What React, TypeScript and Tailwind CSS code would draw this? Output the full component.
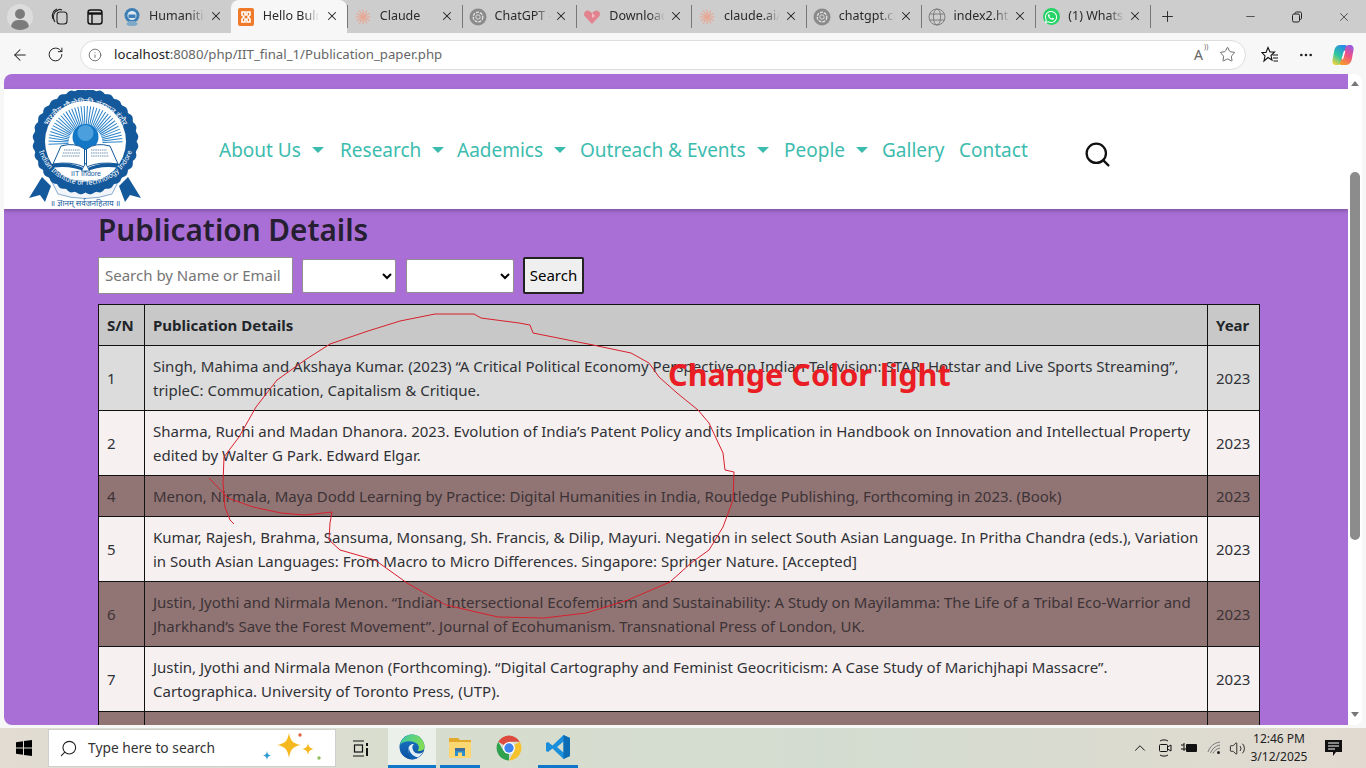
import React from "react";
import {
  ArrowLeft,
  RotateCw,
  Info,
  Star,
  Ellipsis,
  X,
  Plus,
  Minus,
  Search,
  ChevronUp,
  Volume2,
} from "lucide-react";
import { FaWhatsapp } from "react-icons/fa";

const uiFont = "font-['Noto_Sans','Open_Sans',sans-serif]";

// little favicons used on the tabs
function ClaudeMark({ size = 16 }: { size?: number }) {
  return (
    <svg width={size} height={size} viewBox="0 0 16 16" stroke="#e9a692" strokeWidth="1.2" strokeLinecap="round">
      {[0, 30, 60, 90, 120, 150, 180, 210, 240, 270, 300, 330].map((a) => (
        <line key={a} x1="8" y1="8" x2="8" y2="1" transform={`rotate(${a} 8 8)`} />
      ))}
    </svg>
  );
}

function GptMark() {
  return (
    <svg width="18" height="18" viewBox="0 0 18 18">
      <circle cx="9" cy="9" r="8.5" fill="#8a8a8a" />
      <circle cx="9" cy="9" r="4.8" fill="none" stroke="#e5e5e5" strokeWidth="1.3" strokeDasharray="3 1" />
      <circle cx="9" cy="9" r="2.2" fill="none" stroke="#e5e5e5" strokeWidth="0.9" />
    </svg>
  );
}

function Favicon({ kind }: { kind: string }) {
  if (kind === "iit") {
    return (
      <svg width="16" height="20" viewBox="0 0 16 20">
        <circle cx="8" cy="8.5" r="7.5" fill="#3d7fb5" />
        <circle cx="8" cy="8.5" r="4.5" fill="#dce9f2" />
        <rect x="4.5" y="7.5" width="7" height="3.5" fill="#3d7fb5" />
        <path d="M2 17 L5 14 H11 L14 17 L11 19 H5 Z" fill="#7ea9c8" />
      </svg>
    );
  }
  if (kind === "xampp") {
    return (
      <svg width="16" height="18" viewBox="0 0 16 18">
        <rect width="16" height="18" rx="2" fill="#ef7a2a" />
        <path d="M4 4 H7 V7 H9 V4 H12 V7 L10 9 L12 11 V14 H9 V11 H7 V14 H4 V11 L6 9 L4 7 Z" fill="none" stroke="#fff" strokeWidth="1.6" />
      </svg>
    );
  }
  if (kind === "claude") return <ClaudeMark />;
  if (kind === "gpt") return <GptMark />;
  if (kind === "heart") {
    return (
      <svg width="18" height="18" viewBox="0 0 18 18">
        <path d="M9 16 L1.5 8 C-0.5 4.5 4 0.5 7 3.5 L9 5 L11.5 3 C14.5 1 18.5 4.5 16.5 8 Z" fill="#e2848f" />
        <path d="M9 5 L12 8 L9 10 Z" fill="#f3bcc3" />
      </svg>
    );
  }
  if (kind === "globe") {
    return (
      <svg width="18" height="18" viewBox="0 0 18 18" fill="none" stroke="#777" strokeWidth="0.9">
        <circle cx="9" cy="9" r="8" />
        <ellipse cx="9" cy="9" rx="3.6" ry="8" />
        <path d="M1.5 6 H16.5 M1.5 12 H16.5" />
      </svg>
    );
  }
  return (
    <span className="w-[17px] h-[17px] rounded-full bg-[#25d366] flex items-center justify-center text-white">
      <FaWhatsapp size={14} />
    </span>
  );
}

const tabs = [
  { title: "Humanitie", icon: "iit" },
  { title: "Hello Bulm", icon: "xampp", active: true },
  { title: "Claude", icon: "claude" },
  { title: "ChatGPT -", icon: "gpt" },
  { title: "Download", icon: "heart" },
  { title: "claude.ai/c", icon: "claude" },
  { title: "chatgpt.cc", icon: "gpt" },
  { title: "index2.htn", icon: "globe" },
  { title: "(1) Whats", icon: "whatsapp" },
];

function TabStrip() {
  return (
    <div className="flex items-end h-[33px] bg-[#cdcdcd] text-[12.5px] text-[#2a2a2a]">
      <div className="w-[116px] h-full flex items-center shrink-0">
        <span className="ml-[7px] w-[26px] h-[26px] rounded-full bg-[#dcdcdc] relative overflow-hidden flex justify-center">
          <span className="mt-[5px] w-[10px] h-[10px] rounded-full bg-[#7b7b7b]" />
          <span className="absolute top-[16px] w-[18px] h-[14px] rounded-full bg-[#7b7b7b]" />
        </span>
        <svg className="ml-[17px]" width="20" height="20" viewBox="0 0 20 20" fill="none" stroke="#222" strokeWidth="1.1">
          <rect x="7" y="5" width="10" height="12" rx="3" />
          <path d="M5 15 C3 12 3 8 5 5 L9 2.500 C10 2 11 2.500 12 3" />
          <path d="M3 12 C2 9 2.500 6 4 4 L7 2" />
        </svg>
        <svg className="ml-[16px]" width="18" height="18" viewBox="0 0 18 18" fill="none" stroke="#111" strokeWidth="1.4">
          <rect x="2" y="2" width="14" height="14" rx="2.5" />
          <path d="M2 5.500 H16" strokeWidth="2.4" />
          <path d="M6 6 V16" />
        </svg>
      </div>
      {tabs.map((t, i) => (
        <div
          key={i}
          className={
            t.active
              ? "relative w-[116px] h-[33px] shrink-0 flex items-center pl-[6px] bg-[#f7f7f7] rounded-t-lg"
              : "relative w-[114.75px] h-[33px] shrink-0 flex items-center pl-[6px] border-l border-[#8f8f8f] [border-image:linear-gradient(transparent_18%,#777_18%,#777_82%,transparent_82%)_1]"
          }
        >
          <span className="w-[18px] flex justify-center shrink-0">
            <Favicon kind={t.icon} />
          </span>
          <span className="ml-[8px] w-[56px] overflow-hidden whitespace-nowrap [mask-image:linear-gradient(90deg,#000_72%,transparent)]">
            {t.title}
          </span>
          <X className="absolute right-[8px] top-[9px]" size={14} strokeWidth={1.8} color="#222" />
        </div>
      ))}
      <div className="h-full flex items-center border-l border-[#8f8f8f] [border-image:linear-gradient(transparent_18%,#777_18%,#777_82%,transparent_82%)_1]">
        <Plus className="ml-[8px]" size={17} strokeWidth={1.3} color="#222" />
      </div>
      <div className="ml-auto h-full flex items-center">
        <Minus size={13} strokeWidth={1.3} color="#222" />
        <svg className="ml-[34px]" width="12" height="12" viewBox="0 0 12 12" fill="none" stroke="#222" strokeWidth="1">
          <rect x="1.500" y="3" width="7" height="8" rx="1.500" />
          <path d="M4 3 V2.500 C4 1.500 4.500 1 5.500 1 H9 C10 1 10.500 1.500 10.500 2.500 V7 C10.500 8 10 8.500 9 8.500" />
        </svg>
        <X className="ml-[34px] mr-[15px]" size={14} strokeWidth={1.2} color="#222" />
      </div>
    </div>
  );
}

function CopilotIcon() {
  return (
    <svg width="24" height="24" viewBox="0 0 24 24">
      <defs>
        <linearGradient id="copLeft" x1="0.7" y1="0" x2="0.2" y2="1">
          <stop offset="0" stopColor="#2a8be8" />
          <stop offset="0.55" stopColor="#2ec7a0" />
          <stop offset="1" stopColor="#f3d23a" />
        </linearGradient>
        <linearGradient id="copRight" x1="0.7" y1="0" x2="0.3" y2="1">
          <stop offset="0" stopColor="#9a5be0" />
          <stop offset="0.45" stopColor="#ee4f8a" />
          <stop offset="1" stopColor="#f59a2c" />
        </linearGradient>
      </defs>
      <path d="M9 2 H14 C15.500 2 16 3 15.500 4 L12 13 L9.500 20 C9 21.500 8 22 6.500 22 H5 C2.500 22 1 20 1.500 17 L3 9 C3.500 5 5.500 2 9 2 Z" fill="url(#copLeft)" />
      <path d="M15 22 H10 C9 22 8.500 21 9 20 L12.500 11 L14.500 4.500 C15 3 16 2 17.500 2 H19 C21.500 2 23 4 22.500 7 L21 15 C20.500 19 18.500 22 15 22 Z" fill="url(#copRight)" />
      <path d="M11.500 15.500 L13.500 8.500" stroke="#fff" strokeWidth="1.5" strokeLinecap="round" />
    </svg>
  );
}

function AddressBar() {
  return (
    <div className="h-[41px] bg-[#f7f7f7] flex items-center pl-[11px] pt-[2px]">
      <ArrowLeft size={18} strokeWidth={1.4} color="#222" />
      <RotateCw className="ml-[18px]" size={17} strokeWidth={1.4} color="#222" />
      <div className="ml-[16px] w-[1166px] h-[30px] rounded-full bg-white border border-[#dddddd] flex items-center pl-[7px]">
        <Info size={14} strokeWidth={1.5} color="#666" />
        <span className="ml-[12px] text-[13.2px] text-[#666]">
          <span className="text-[#1d1d1d]">localhost</span>:8080/php/IIT_final_1/Publication_paper.php
        </span>
        <span className="ml-auto text-[14px] text-[#666] relative">
          A<span className="absolute -top-[2px] left-[10px] text-[7px]">))</span>
        </span>
        <Star className="ml-[16px] mr-[9px]" size={17} strokeWidth={1.1} color="#444" />
      </div>
      <svg className="ml-[15px]" width="18" height="18" viewBox="0 0 18 18" fill="none" stroke="#111" strokeWidth="1.1">
        <path d="M7 1.500 L9 6 H13.500 L10 9.500 L11 14 L7 11.500 L3 15 L4 10 L1 6.500 H5 Z" />
        <path d="M11.500 9 H17 M12 12 H17 M12.500 15 H17" />
      </svg>
      <Ellipsis className="ml-[19px]" size={16} color="#222" />
      <span className="ml-[17px]">
        <CopilotIcon />
      </span>
    </div>
  );
}

function scallopPath(cx: number, cy: number, r: number, bumps: number, depth: number) {
  const pts: string[] = [];
  for (let i = 0; i < 360; i += 2) {
    const a = (i * Math.PI) / 180;
    const rr = r + depth * Math.abs(Math.sin((a * bumps) / 2));
    pts.push(`${(cx + rr * Math.cos(a)).toFixed(1)},${(cy + rr * Math.sin(a)).toFixed(1)}`);
  }
  return `M${pts.join("L")}Z`;
}

function Logo() {
  const blue = "#14599c";
  const rays: number[] = [];
  for (let a = -92; a <= 92; a += 5) rays.push(a);
  return (
    <svg width="112" height="118" viewBox="0 0 112 118">
      <defs>
        <path id="logoTop" d="M 13 58 A 43.500 43.500 0 1 1 100 58" />
        <path id="logoBot" d="M 7.500 46 A 49 49 0 1 0 105.500 46" />
      </defs>
      {/* ribbons */}
      <path d="M20 86 L29 104 Q56 113 83 104 L92 86 Z" fill="#f2f5f9" stroke={blue} strokeWidth="0.5" />
      <path d="M13 87 L0 108 L11 105 L16 112 L22 96 Z" fill={blue} />
      <path d="M99 87 L112 108 L101 105 L96 112 L90 96 Z" fill={blue} />
      <path d={scallopPath(56.5, 51.5, 51, 32, 2)} fill={blue} />
      <circle cx="56.500" cy="51.500" r="40.500" fill="#fff" />
      {rays.map((a) => (
        <line key={a} x1="56.500" y1="36" x2="56.500" y2="16" strokeWidth="1" transform={`rotate(${a} 56.500 53)`} stroke="#2c83c9" />
      ))}
      <circle cx="56.500" cy="47" r="13" fill="#1477c6" />
      <circle cx="56.500" cy="43" r="8" fill="#4a9fdc" />
      {/* open book */}
      <path d="M24 74 L32 56 Q46 52 55.500 59 L55.500 77 Q42 71 24 74 Z" fill="#fff" stroke={blue} strokeWidth="1" />
      <path d="M89 74 L81 56 Q67 52 57.500 59 L57.500 77 Q71 71 89 74 Z" fill="#fff" stroke={blue} strokeWidth="1" />
      <path d="M35 60 H51 M34 63 H51 M33 66 H51 M62 60 H78 M62 63 H79 M62 66 H80" stroke="#6e8fb0" strokeWidth="1" strokeDasharray="1.500 0.700" />
      <path d="M23 74 Q41 71 56.500 79 Q72 71 90 74 L90 78 Q72 75 56.500 82 Q41 75 23 78 Z" fill={blue} />
      <path d="M56.500 73 L60.500 81 H52.500 Z" fill="#fff" stroke={blue} strokeWidth="0.8" />
      <text x="57" y="85.500" textAnchor="middle" fontSize="7" fill={blue} fontFamily="Liberation Sans, sans-serif">IIT Indore</text>
      <path d="M36 88.500 Q56.500 94 77 88.500" fill="none" stroke={blue} strokeWidth="0.7" />
      <text fontSize="7" fill="#fff" fontFamily="Noto Sans, sans-serif">
        <textPath href="#logoBot" startOffset="50%" textAnchor="middle">Indian Institute of Technology Indore</textPath>
      </text>
      <text fontSize="8" fill="#fff" fontFamily="Noto Sans, sans-serif">
        <textPath href="#logoTop" startOffset="50%" textAnchor="middle">भारतीय प्रौद्योगिकी संस्थान इंदौर</textPath>
      </text>
      <text x="56.500" y="116" textAnchor="middle" fontSize="8" fill={blue} fontFamily="Noto Sans, sans-serif">॥ ज्ञानम् सर्वजनहिताय ॥</text>
    </svg>
  );
}

const navItems = [
  { label: "About Us", caret: true, w: "w-[121px]" },
  { label: "Research", caret: true, w: "w-[117px]" },
  { label: "Aademics", caret: true, w: "w-[123px]" },
  { label: "Outreach & Events", caret: true, w: "w-[204px]" },
  { label: "People", caret: true, w: "w-[98px]" },
  { label: "Gallery", caret: false, w: "w-[77px]" },
  { label: "Contact", caret: false, w: "w-[124px]" },
];

function Header() {
  return (
    <div className="relative h-[120px] bg-white flex items-center shadow-[0_2px_4px_rgba(0,0,0,0.25)]">
      <div className="ml-[25px] w-[190px] shrink-0">
        <Logo />
      </div>
      <nav className="flex items-center mt-[2px] text-[19px] text-[#3cbcae]">
        {navItems.map((n) => (
          <span key={n.label} className={`${n.w} flex items-center whitespace-nowrap`}>
            {n.label}
            {n.caret && (
              <span className="ml-[11px] mb-[1px] w-0 h-0 border-x-[6px] border-x-transparent border-t-[6px] border-t-[#3cbcae]" />
            )}
          </span>
        ))}
        <Search size={29} strokeWidth={1.9} color="#111" className="mt-[8px]" />
      </nav>
    </div>
  );
}

const rows = [
  {
    sn: "1",
    tone: "grey",
    lines: [
      "Singh, Mahima and Akshaya Kumar. (2023) “A Critical Political Economy Perspective on Indian Television: STAR, Hotstar and Live Sports Streaming”,",
      "tripleC: Communication, Capitalism & Critique.",
    ],
  },
  {
    sn: "2",
    tone: "light",
    lines: [
      "Sharma, Ruchi and Madan Dhanora. 2023. Evolution of India’s Patent Policy and its Implication in Handbook on Innovation and Intellectual Property",
      "edited by Walter G Park. Edward Elgar.",
    ],
  },
  {
    sn: "4",
    tone: "dark",
    lines: ["Menon, Nirmala, Maya Dodd Learning by Practice: Digital Humanities in India, Routledge Publishing, Forthcoming in 2023. (Book)"],
  },
  {
    sn: "5",
    tone: "light",
    lines: [
      "Kumar, Rajesh, Brahma, Sansuma, Monsang, Sh. Francis, & Dilip, Mayuri. Negation in select South Asian Language. In Pritha Chandra (eds.), Variation",
      "in South Asian Languages: From Macro to Micro Differences. Singapore: Springer Nature. [Accepted]",
    ],
  },
  {
    sn: "6",
    tone: "dark",
    lines: [
      "Justin, Jyothi and Nirmala Menon. “Indian Intersectional Ecofeminism and Sustainability: A Study on Mayilamma: The Life of a Tribal Eco-Warrior and",
      "Jharkhand’s Save the Forest Movement”. Journal of Ecohumanism. Transnational Press of London, UK.",
    ],
  },
  {
    sn: "7",
    tone: "light",
    lines: [
      "Justin, Jyothi and Nirmala Menon (Forthcoming). “Digital Cartography and Feminist Geocriticism: A Case Study of Marichjhapi Massacre”.",
      "Cartographica. University of Toronto Press, (UTP).",
    ],
  },
];

const toneClass: Record<string, string> = {
  grey: "bg-[#dcdcdc] text-[#2f3236]",
  light: "bg-[#f7f0f1] text-[#2f3236]",
  dark: "bg-[#917575] text-[#3d3336]",
};

function PublicationTable() {
  const cell = "border border-[#111] px-2 py-2 align-middle";
  return (
    <table className="w-[1162px] table-fixed border-collapse text-[15px] leading-6">
      <colgroup>
        <col className="w-[46px]" />
        <col />
        <col className="w-[52px]" />
      </colgroup>
      <thead>
        <tr className="bg-[#c8c8c8] text-[#212529]">
          <th className={`${cell} text-left font-bold whitespace-nowrap`}>S/N</th>
          <th className={`${cell} text-left font-bold`}>Publication Details</th>
          <th className={`${cell} text-left font-bold`}>Year</th>
        </tr>
      </thead>
      <tbody>
        {rows.map((r) => (
          <tr key={r.sn} className={toneClass[r.tone]}>
            <td className={cell}>{r.sn}</td>
            <td className={`${cell} whitespace-nowrap`}>
              {r.lines.map((l) => (
                <div key={l}>{l}</div>
              ))}
            </td>
            <td className={cell}>2023</td>
          </tr>
        ))}
        <tr className="bg-[#917575] h-[65px]">
          <td className={cell} />
          <td className={cell} />
          <td className={cell} />
        </tr>
      </tbody>
    </table>
  );
}

function Scrollbar() {
  return (
    <div className="w-[14px] shrink-0 bg-white flex flex-col items-center">
      <span className="mt-[7px] w-0 h-0 border-x-[4px] border-x-transparent border-b-[5px] border-b-[#777]" />
      <span className="mt-[86px] w-[10px] h-[368px] rounded-full bg-[#8c8c8c]" />
      <span className="mt-auto mb-[8px] w-0 h-0 border-x-[4px] border-x-transparent border-t-[5px] border-t-[#777]" />
    </div>
  );
}

function Page() {
  return (
    <div className="mx-[4px] h-[651px] rounded-lg overflow-hidden flex bg-white">
      <div className="w-[1344px] shrink-0 bg-[#a96fd6] overflow-hidden">
        <div className="h-[15px]" />
        <Header />
        <div className="pl-[94px]">
          <h1 className="text-[29.7px] leading-[42px] font-semibold text-[#261f31]">Publication Details</h1>
          <form className="flex items-center mt-[6px] h-[37px]">
            <input
              readOnly
              placeholder="Search by Name or Email"
              className="w-[195px] h-[37px] bg-white px-[6px] pb-[2px] text-[15px] border border-[#8f8f8f] placeholder:text-[#757575] outline-none"
            />
            <select className="ml-[9px] w-[94px] h-[34px] bg-white border border-[#8f8f8f] rounded-[2px]" />
            <select className="ml-[10px] w-[108px] h-[34px] bg-white border border-[#8f8f8f] rounded-[2px]" />
            <button type="button" className="ml-[9px] w-[61px] h-[37px] bg-[#efefef] border-2 border-[#222] rounded-[2px] text-[15px] text-black">
              Search
            </button>
          </form>
          <div className="mt-[10px]">
            <PublicationTable />
          </div>
        </div>
      </div>
      <Scrollbar />
    </div>
  );
}

function EdgeIcon() {
  return (
    <svg width="26" height="26" viewBox="0 0 26 26">
      <defs>
        <linearGradient id="edgeA" x1="0" y1="0" x2="1" y2="0.4">
          <stop offset="0" stopColor="#36c9a8" />
          <stop offset="1" stopColor="#7fdc56" />
        </linearGradient>
        <linearGradient id="edgeB" x1="0" y1="0" x2="0" y2="1">
          <stop offset="0" stopColor="#1a78c8" />
          <stop offset="1" stopColor="#0c4f9f" />
        </linearGradient>
      </defs>
      <circle cx="13" cy="13" r="12.500" fill="url(#edgeB)" />
      <path d="M1 11 C3 3 9 0.500 13 0.500 C21 0.500 25.500 7 25.500 13 C25.500 16 22 17.500 18.500 17 C21 14 20 10 16 8.500 C11 6.500 4 7 1 11 Z" fill="url(#edgeA)" />
      <path d="M9.500 15 C9.500 11.500 12 10 15 10 C13 11.500 13 14 14 16 C15.500 19.500 20 21 24 18 C21.500 23 16.500 25.500 13 25 C10 23 9.500 18 9.500 15 Z" fill="#eef7fb" opacity="0.95" />
      <path d="M12 25 C9.500 22.500 9 17.500 10 14.500 C10.500 18 13 22 19 23.500 C17 25 14.500 25.500 12 25 Z" fill="#0d5fb0" />
    </svg>
  );
}

function ExplorerIcon() {
  return (
    <svg width="24" height="24" viewBox="0 0 24 24">
      <path d="M1 3 H10 L12 5 H23 V10 H1 Z" fill="#e3a92a" />
      <rect x="1" y="7" width="22" height="16" rx="1" fill="#fcd772" />
      <path d="M7 15 H17 V21 H14 V17.500 H10 V21 H7 Z" fill="#2a8fd1" />
      <rect x="7" y="13" width="10" height="3" fill="#3c6f9b" />
    </svg>
  );
}

function ChromeIcon() {
  return (
    <svg width="26" height="26" viewBox="0 0 26 26">
      <path d="M13 13 L2.200 6.800 A12.500 12.500 0 0 1 23.800 6.800 L13 6.800 Z" fill="#dd4b3e" />
      <path d="M13 13 L13 25.500 A12.500 12.500 0 0 1 2.200 6.800 L7.600 16.100 Z" fill="#2fa14f" />
      <path d="M13 13 L23.800 6.800 A12.500 12.500 0 0 1 13 25.500 L18.400 16.100 Z" fill="#f6c32c" />
      <circle cx="13" cy="13" r="6" fill="#fff" />
      <circle cx="13" cy="13" r="4.700" fill="#3f83ee" />
    </svg>
  );
}

function VsCodeIcon() {
  return (
    <svg width="26" height="26" viewBox="0 0 26 26">
      <path d="M18.500 1 L25 4 V22 L18.500 25 L7.500 14.500 L3 18 L1 17 V9 L3 8 L7.500 11.500 Z M18.500 7.500 L12 13 L18.500 18.500 Z" fill="#1c8fdc" fillRule="evenodd" />
      <path d="M18.500 1 L25 4 V22 L18.500 25 Z" fill="#0c6db5" />
    </svg>
  );
}

function Sparkles() {
  return (
    <svg className="ml-auto mr-[13px]" width="60" height="34" viewBox="0 0 60 34">
      <path d="M27 2 C28.500 10 31 12.500 39 14 C31 15.500 28.500 18 27 27 C25.500 18 23 15.500 15 14 C23 12.500 25.500 10 27 2 Z" fill="#f6b81f" />
      <path d="M46 12 C46.700 16 48 17.300 52 18 C48 18.700 46.700 20 46 24 C45.300 20 44 18.700 40 18 C44 17.300 45.300 16 46 12 Z" fill="#f6b81f" />
      <path d="M5 20 C5.400 23 6.500 24 9 24.500 C6.500 25 5.400 26 5 29 C4.600 26 3.500 25 1 24.500 C3.500 24 4.600 23 5 20 Z" fill="#2f9bd6" />
      <circle cx="38" cy="4" r="1.700" fill="#e0633c" />
      <circle cx="57" cy="27" r="1.700" fill="#8fbf5c" />
    </svg>
  );
}

function Taskbar() {
  return (
    <div className="mt-[3px] h-[40px] flex items-center bg-[linear-gradient(90deg,#e2dcd2_0%,#d8ddce_30%,#d3dcd0_60%,#e2dad0_100%)] text-[#111]">
      <svg className="ml-[16px]" width="16" height="16" viewBox="0 0 16 16" fill="#000">
        <path d="M0 2.300 L7 1.300 V7.600 H0 Z M8 1.100 L16 0 V7.600 H8 Z M0 8.500 H7 V14.800 L0 13.700 Z M8 8.500 H16 V16 L8 14.900 Z" />
      </svg>
      <div className="ml-[16px] w-[288px] h-[38px] bg-white border border-[#cfcfcf] flex items-center pl-[10px]">
        <Search className="-scale-x-100" size={19} strokeWidth={1.4} color="#222" />
        <span className="ml-[10px] text-[13.8px] text-[#333]">Type here to search</span>
        <Sparkles />
      </div>
      <svg className="ml-[16px]" width="17" height="17" viewBox="0 0 17 17" fill="none" stroke="#111" strokeWidth="1.200">
        <path d="M1 1 H12 M1 16 H12" />
        <rect x="2.500" y="5" width="8" height="7" />
        <rect x="14" y="3" width="2" height="3" fill="#111" stroke="none" />
        <rect x="14" y="8" width="2" height="8" fill="#111" stroke="none" />
      </svg>
      <div className="ml-[19px] w-[48px] h-full bg-[#ecf0ea] border-b-[3px] border-[#0f78c8] flex items-center justify-center">
        <EdgeIcon />
      </div>
      <div className="ml-[4px] w-[40px] h-full border-b-[3px] border-[#0f78c8] flex items-center justify-center">
        <ExplorerIcon />
      </div>
      <div className="ml-[9px] w-[40px] h-full flex items-center justify-center">
        <ChromeIcon />
      </div>
      <div className="ml-[9px] w-[40px] h-full border-b-[3px] border-[#0f78c8] flex items-center justify-center">
        <VsCodeIcon />
      </div>
      <div className="ml-auto flex items-center h-full">
        <ChevronUp size={18} strokeWidth={1.3} />
        <svg className="ml-[9px]" width="14" height="18" viewBox="0 0 14 18" fill="none" stroke="#111" strokeWidth="1">
          <path d="M2 2 C4 0.500 8 0.500 10 2 M2 16 C4 17.500 8 17.500 10 16" />
          <rect x="1.500" y="5.500" width="8" height="7" rx="1" />
          <path d="M9.500 8 L13 6 V12 L9.500 10" />
        </svg>
        <svg className="ml-[9px]" width="17" height="12" viewBox="0 0 17 12" fill="#111">
          <rect x="5" y="2" width="11" height="8" rx="1" />
          <path d="M0 3 H3 V1 M0 7 H3 V9 M3 3 V7 H5" fill="none" stroke="#111" strokeWidth="1" />
        </svg>
        <svg className="ml-[9px]" width="16" height="16" viewBox="0 0 16 16" fill="none" stroke="#7a7a7a" strokeWidth="1">
          <path d="M1 12 C3 6 7 3 13 2 M3.500 13 C5 9 8 6 13 5 M6 13.500 C7 11 9 9 13 8" />
          <circle cx="11.500" cy="12.500" r="1.500" fill="#222" stroke="none" />
        </svg>
        <Volume2 className="ml-[6px]" size={17} strokeWidth={1.2} />
        <div className="ml-[4px] w-[58px] flex flex-col items-center text-[12px] leading-[18px] whitespace-nowrap text-[#222]">
          <span>12:46 PM</span>
          <span>3/12/2025</span>
        </div>
        <svg className="ml-[17px] mr-[24px]" width="17" height="16" viewBox="0 0 17 16">
          <path d="M0 0 H17 V12 H11 L8 16 V12 H0 Z" fill="#111" />
          <path d="M3 3 H14 M3 6 H14 M3 9 H10" stroke="#fff" strokeWidth="1" />
        </svg>
      </div>
    </div>
  );
}

const scribble =
  "M209 478 L228 498 L253 507 L281 513 L305 515 L332 512 L330 523 L329 540 L340 550 L375 560 L407 583 L446 605 L498 617 L544 618 L586 613 L628 600 L670 582 L691 563 L709 550 L723 527 L733 500 L734 472 L725 470 L723 453 L709 423 L698 410 L677 393 L659 377 L649 363 L631 353 L593 345 L533 333 L530 325 L519 323 L481 318 L474 314 L435 314 L400 321 L368 331 L330 344 L305 360 L277 380 L256 407 L239 437 L224 457 L223 483 L225 507 L230 520 L234 524";

export default function App() {
  return (
    <div className={`relative w-[1366px] h-[768px] overflow-hidden bg-[#f7f7f7] ${uiFont}`}>
      <TabStrip />
      <AddressBar />
      <Page />
      <Taskbar />
      {/* red pen notes drawn over the page */}
      <svg className="absolute inset-0 pointer-events-none" width="1366" height="768">
        <path d={scribble} fill="none" stroke="#d8202c" strokeWidth="1" strokeLinejoin="round" />
      </svg>
      <span className="absolute left-[668px] top-[352px] text-[30.6px] leading-[44px] font-bold text-[#ea1c24] whitespace-nowrap">
        Change Color light
      </span>
    </div>
  );
}
